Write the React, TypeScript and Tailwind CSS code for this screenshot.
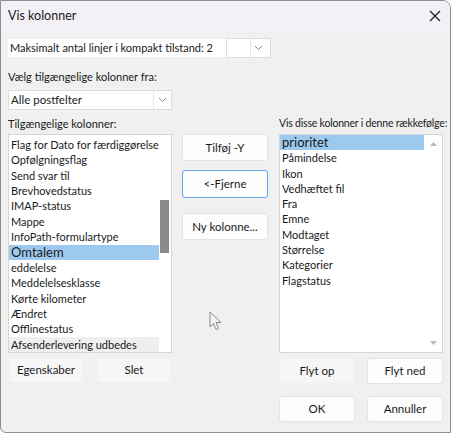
import React from 'react'

const leftItems = [
  'Flag for Dato for færdiggørelse',
  'Opfølgningsflag',
  'Send svar til',
  'Brevhovedstatus',
  'IMAP-status',
  'Mappe',
  'InfoPath-formulartype',
  'Omtalem',
  'eddelelse',
  'Meddelelsesklasse',
  'Kørte kilometer',
  'Ændret',
  'Offlinestatus',
  'Afsenderlevering udbedes',
]

const rightItems = [
  'prioritet',
  'Påmindelse',
  'Ikon',
  'Vedhæftet fil',
  'Fra',
  'Emne',
  'Modtaget',
  'Størrelse',
  'Kategorier',
  'Flagstatus',
]

function Chevron() {
  return (
    <svg width="9" height="6" viewBox="0 0 9 6">
      <path d="M1 1 L4.5 4.5 L8 1" fill="none" stroke="#8a8a8a" strokeWidth="1" />
    </svg>
  )
}

function Btn({ label, blue, soft }: { label: string; blue?: boolean; soft?: boolean }) {
  return (
    <button
      className={
        'h-[26px] w-[76px] rounded-[3px] border text-[11.5px] text-[#1a1a1a] ' +
        (blue ? 'border-[#6aa3e6] bg-[#fdfdfd] ' : soft ? 'border-[#f0f0f0] bg-[#f6f6f6] ' : 'border-[#e3e3e3] bg-[#fdfdfd] ')
      }
    >
      {label}
    </button>
  )
}

export default function App() {
  return (
    <div className="w-[452px] h-[434px] bg-white" style={{ fontFamily: 'Lato, "Liberation Sans", sans-serif' }}>
      <div className="relative w-[451px] h-[433px] border border-[#8e8e8e] rounded-tr-[8px] rounded-bl-[6px] overflow-hidden bg-[#f0f0f0] flex flex-col">
        {/* Title bar */}
        <div className="h-[30px] bg-[#f3f1f6] flex items-center justify-between pl-[7px] pr-[9px]">
          <span className="text-[12.5px] text-[#1a1a1a]">Vis kolonner</span>
          <svg width="12" height="12" viewBox="0 0 12 12">
            <path d="M1 1 L11 11 M11 1 L1 11" stroke="#1a1a1a" strokeWidth="1.2" />
          </svg>
        </div>

        <div className="flex-1 px-[7px] text-[11px] text-[#1a1a1a]">
          {/* Compact lines */}
          <div className="mt-[7px] flex items-center h-[20px]">
            <span className="bg-white h-[18px] w-[218px] flex items-center pl-[2px] whitespace-nowrap">
              Maksimalt antal linjer i kompakt tilstand: 2
            </span>
            <div className="h-[20px] w-[45px] bg-white border border-[#dcdcdc] flex justify-end items-center pr-[4px]">
              <div className="h-[18px] w-[16px] border-l border-[#e6e6e6] flex items-center justify-center">
                <Chevron />
              </div>
            </div>
          </div>

          <div className="mt-[11px] h-[16px] leading-[16px]">Vælg tilgængelige kolonner fra:</div>

          <div className="mt-[5px] h-[20px] w-[164px] bg-white border border-[#dcdcdc] flex items-center justify-between">
            <span className="pl-[2px] text-[11.5px]">Alle postfelter</span>
            <div className="h-[18px] w-[18px] border-l border-[#e6e6e6] flex items-center justify-center">
              <Chevron />
            </div>
          </div>

          {/* Columns */}
          <div className="mt-[6px] flex">
            <div className="w-[164px] flex flex-col">
              <div className="h-[15px] leading-[15px]">Tilgængelige kolonner:</div>
              <div className="mt-[3px] h-[219px] bg-white border border-[#d6d6d6] flex">
                <div className="flex-1 pt-[2px] flex flex-col">
                  {leftItems.map((t) => (
                    <div
                      key={t}
                      className={
                        'h-[15.4px] leading-[15.4px] pl-[2px] whitespace-nowrap overflow-hidden ' +
                        (t === 'Omtalem'
                          ? 'bg-[#9dc9ef] text-[13px]'
                          : t === 'Afsenderlevering udbedes'
                          ? 'bg-[#efefef]'
                          : '')
                      }
                    >
                      {t}
                    </div>
                  ))}
                </div>
                <div className="w-[17px] flex justify-center pt-[65px]">
                  <div className="w-[9px] h-[53px] bg-[#8a8a8a]" />
                </div>
              </div>
              <div className="mt-[4px] flex justify-between">
                <Btn label="Egenskaber" soft />
                <Btn label="Slet" soft />
              </div>
            </div>

            <div className="w-[115px] flex flex-col items-start pl-[10px] pt-[18px] gap-[9px]">
              <button className="h-[27px] w-[86px] rounded-[3px] border border-[#e3e3e3] bg-[#fdfdfd] text-[11.5px]">Tilføj -Y</button>
              <button className="h-[28px] w-[86px] rounded-[3px] border border-[#6aa3e6] bg-[#fdfdfd] text-[11.5px]">&lt;-Fjerne</button>
              <button className="mt-[6px] h-[27px] w-[86px] rounded-[3px] border border-[#e3e3e3] bg-[#fdfdfd] text-[11.5px]">Ny kolonne...</button>
            </div>

            <div className="w-[164px] flex flex-col">
              <div className="h-[15px] leading-[15px] whitespace-nowrap text-[10.5px] tracking-[-0.2px]">Vis disse kolonner i denne rækkefølge:</div>
              <div className="mt-[3px] h-[219px] bg-white border border-[#d6d6d6] flex">
                <div className="flex-1 flex flex-col">
                  {rightItems.map((t) => (
                    <div
                      key={t}
                      className={
                        'h-[15.3px] leading-[15.3px] pl-[2px] whitespace-nowrap ' +
                        (t === 'prioritet' ? 'bg-[#9dc9ef] text-[13px] w-[144px]' : '')
                      }
                    >
                      {t}
                    </div>
                  ))}
                </div>
                <div className="w-[19px] flex flex-col items-center justify-between py-[7px]">
                  <svg width="7" height="4" viewBox="0 0 7 4"><path d="M0 4 L3.5 0 L7 4Z" fill="#b8b8b8" /></svg>
                  <svg width="7" height="4" viewBox="0 0 7 4"><path d="M0 0 L3.5 4 L7 0Z" fill="#b8b8b8" /></svg>
                </div>
              </div>
              <div className="mt-[5px] flex justify-between">
                <Btn label="Flyt op" soft />
                <Btn label="Flyt ned" />
              </div>
              <div className="mt-[12px] flex justify-between">
                <Btn label="OK" />
                <Btn label="Annuller" />
              </div>
            </div>
          </div>
        </div>

        {/* mouse pointer */}
        <svg className="absolute left-[208px] top-[310px]" width="14" height="20" viewBox="0 0 14 20">
          <path d="M1 1 L1 16 L4.5 12.5 L7 18.5 L9.5 17.5 L7 11.5 L12 11.5 Z" fill="#f4f4f4" stroke="#8a8a8a" strokeWidth="1" />
        </svg>
      </div>
    </div>
  )
}
